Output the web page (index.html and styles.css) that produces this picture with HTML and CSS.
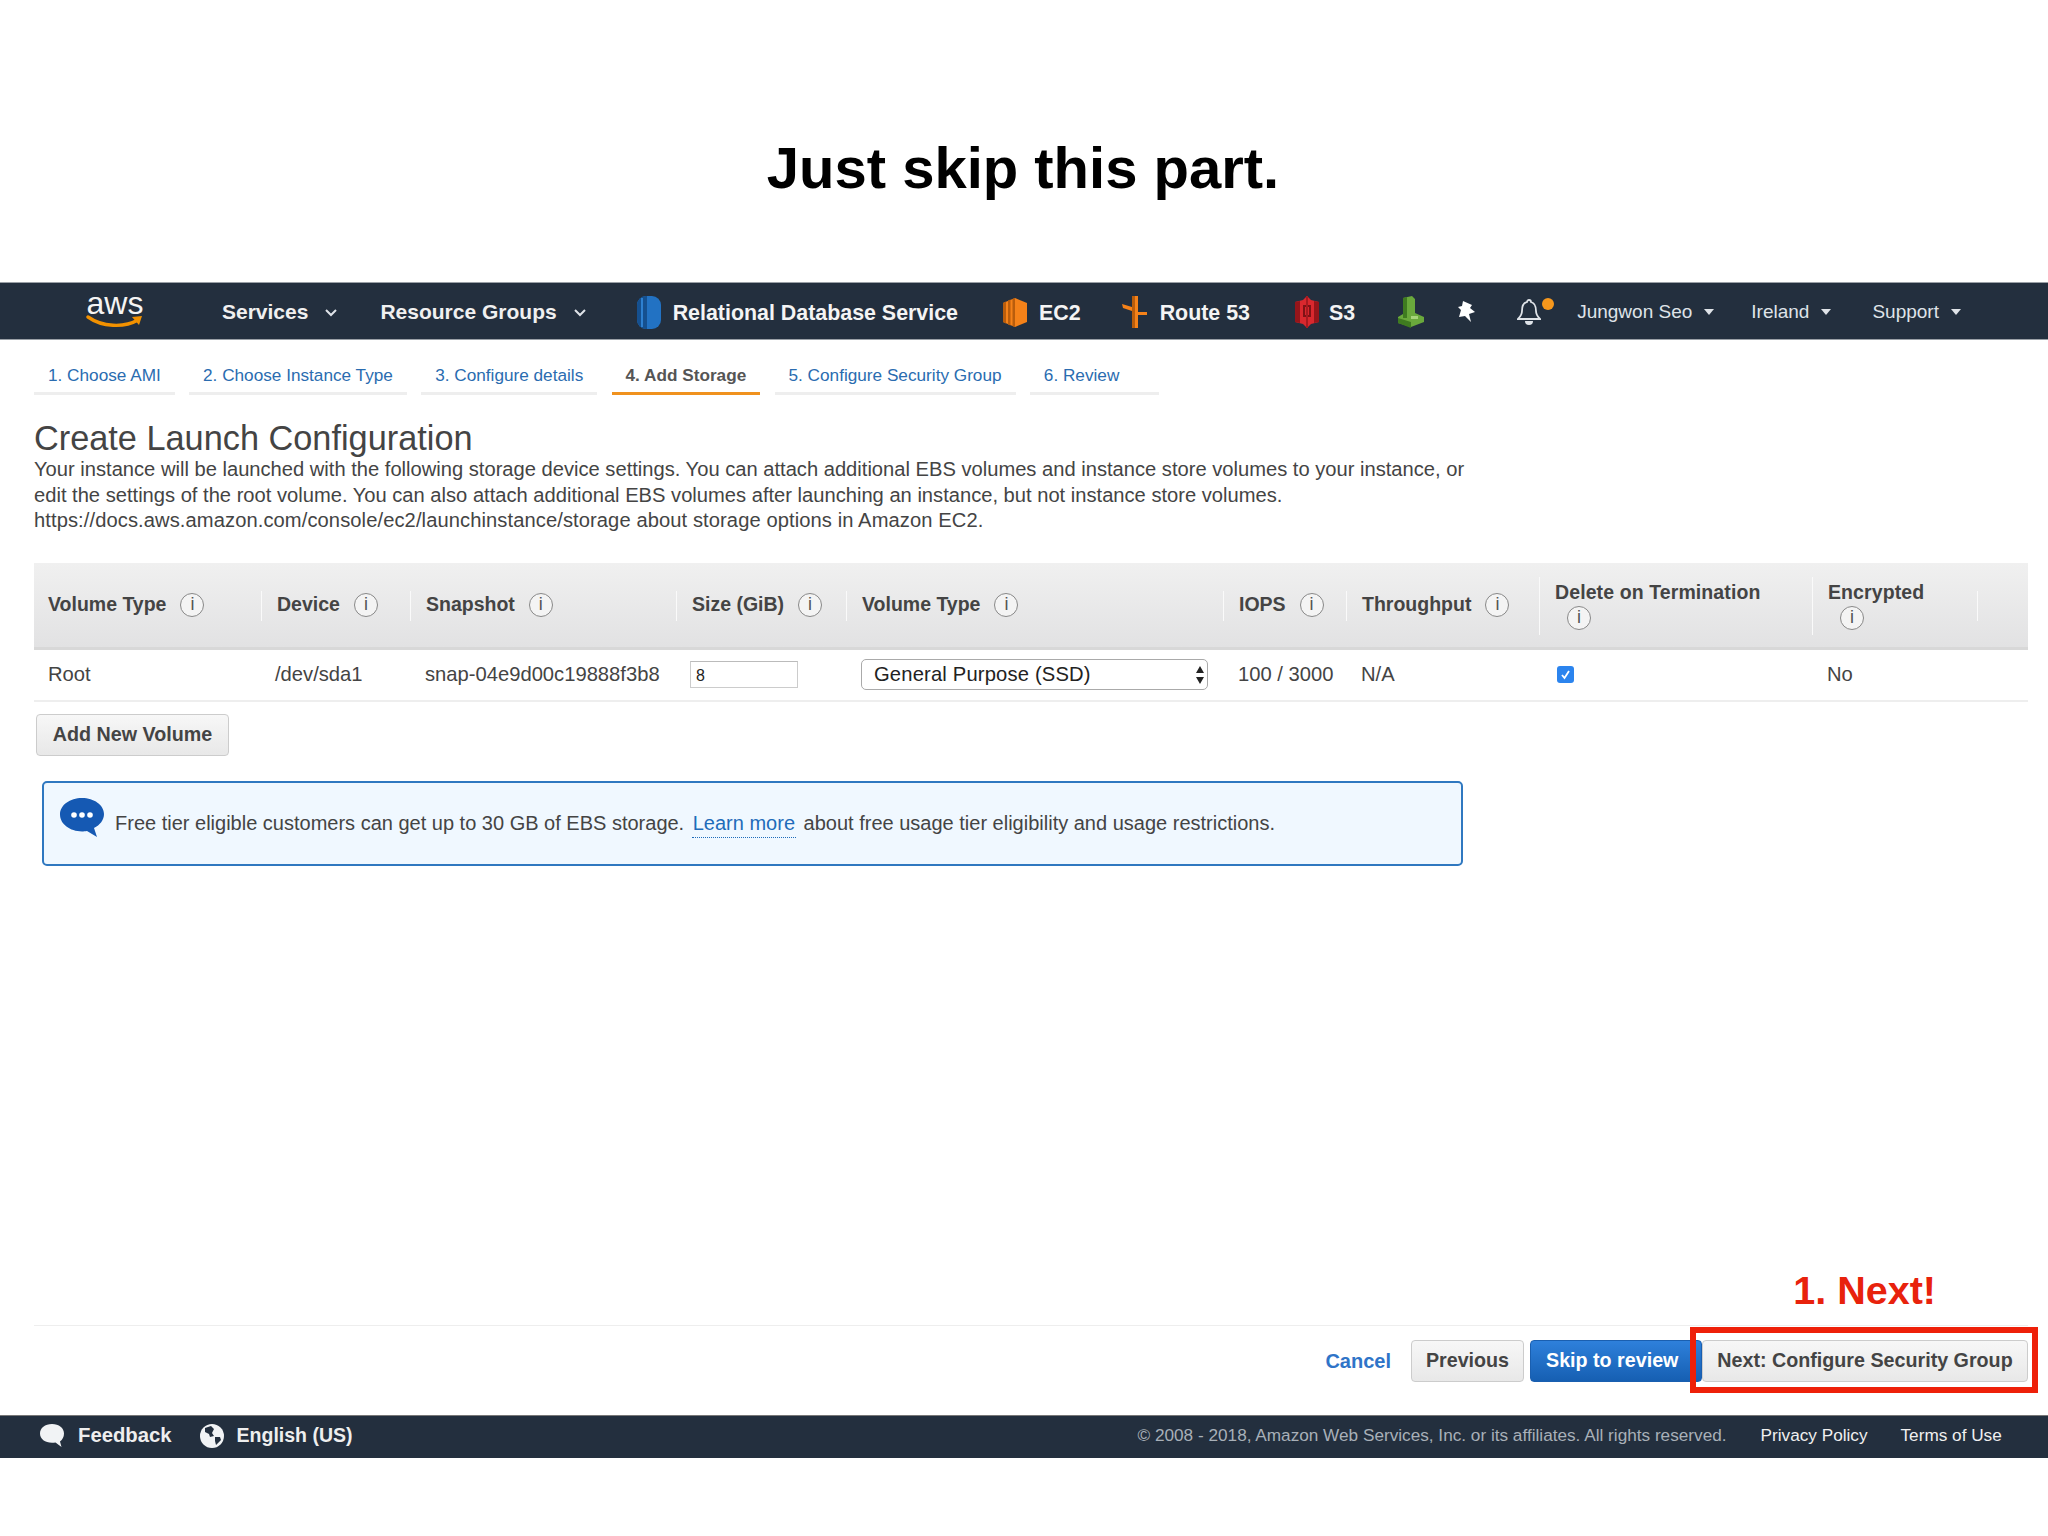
FILE: index.html
```html
<!DOCTYPE html>
<html lang="en">
<head>
<meta charset="utf-8">
<title>Just skip this part.</title>
<link rel="stylesheet" href="styles.css">
</head>
<body>
<header class="slide-head"><h1>Just skip this part.</h1></header>

<nav class="topnav">
  <div class="aws-logo">
    <span class="aws-word">aws</span>
    <svg class="aws-smile" width="58" height="14" viewBox="0 0 58 14"><path d="M2 2C16 12 38 13 52 5" fill="none" stroke="#f29100" stroke-width="3.4" stroke-linecap="round"/><path d="M46 2l10-1-3 9z" fill="#f29100"/></svg>
  </div>
  <a class="nav-menu nav-services">Services<svg class="chev" width="12" height="8" viewBox="0 0 12 8"><path d="M1 1l5 5 5-5" fill="none" stroke="#dfe3e8" stroke-width="2"/></svg></a>
  <a class="nav-menu nav-groups">Resource Groups<svg class="chev" width="12" height="8" viewBox="0 0 12 8"><path d="M1 1l5 5 5-5" fill="none" stroke="#dfe3e8" stroke-width="2"/></svg></a>
  <a class="svc svc-rds">
    <svg width="24" height="33" viewBox="0 0 24 33"><rect width="24" height="33" rx="9" fill="#2272c3"/><path d="M9 0h1v33H9a9 9 0 0 1-9-9V9a9 9 0 0 1 9-9z" fill="#15508f"/><path d="M4 2h2v29H4z" fill="#2e80d0"/></svg>
    <span>Relational Database Service</span>
  </a>
  <a class="svc svc-ec2">
    <svg width="24" height="29" viewBox="0 0 24 29"><path d="M12 0l12 5v19l-12 5L0 24V5z" fill="#f58219"/><path d="M0 5l3-1.500v22L0 24zM5 2.500l2.500-1v26l-2.500-1zM9.500 1l2.500-1v29l-2.500-1z" fill="#b95d0c"/></svg>
    <span>EC2</span>
  </a>
  <a class="svc svc-route">
    <svg width="25" height="32" viewBox="0 0 25 32"><path d="M10 0h6v32h-6z" fill="#f58219"/><path d="M10 0h3v32h-3z" fill="#b95d0c"/><path d="M0 8l10 3v4L1 12zM16 16h9v3h-9z" fill="#f58219"/></svg>
    <span>Route 53</span>
  </a>
  <a class="svc svc-s3">
    <svg width="24" height="32" viewBox="0 0 24 32"><path d="M12 0l4 4 8 2v20l-8 2-4 4-4-4-8-2V6l8-2z" fill="#d9282e"/><path d="M0 6l5-1v22l-5-1zM19 5l5 1v20l-5 1z" fill="#96151a"/><path d="M9 10h6v10H9z" fill="none" stroke="#7f1216" stroke-width="2"/><path d="M11 0h2v32h-2z" fill="#a81a20"/></svg>
    <span>S3</span>
  </a>
  <svg class="icon-green" width="26" height="32" viewBox="0 0 26 32"><path d="M5 2l9-2 3 3v14l9 4v5l-13 5L0 27v-6l5-3z" fill="#6aa93c"/><path d="M5 2l4-1v21H5zM0 22l13 4v6L0 27z" fill="#3f7b20"/><path d="M13 20h7v3h-7z" fill="#a7d47a"/></svg>
  <svg class="icon-pin" width="18" height="22" viewBox="0 0 18 22"><path d="M5 0l9 4-2 3 5 4-6 2 2 8-6-6-6 1 2-7-3-3 4-1z" fill="#fff"/></svg>
  <span class="bell">
    <svg width="24" height="28" viewBox="0 0 24 28"><path d="M12 2a2 2 0 0 1 2 2c4 1 5 5 5 9 0 4 2 6 4 8H1c2-2 4-4 4-8 0-4 1-8 5-9a2 2 0 0 1 2-2z" fill="none" stroke="#dfe3e8" stroke-width="1.800"/><path d="M8 23a4 4 0 0 0 8 0z" fill="#dfe3e8"/></svg>
    <i class="bell-dot"></i>
  </span>
  <a class="nav-user nav-jungwon">Jungwon Seo<i class="caret"></i></a>
  <a class="nav-user nav-ireland">Ireland<i class="caret"></i></a>
  <a class="nav-user nav-support">Support<i class="caret"></i></a>
</nav>

<ul class="tabs">
  <li class="tab"><a>1. Choose AMI</a></li>
  <li class="tab"><a>2. Choose Instance Type</a></li>
  <li class="tab"><a>3. Configure details</a></li>
  <li class="tab tab-active"><a>4. Add Storage</a></li>
  <li class="tab"><a>5. Configure Security Group</a></li>
  <li class="tab tab-last"><a>6. Review</a></li>
</ul>

<main class="content">
  <h2>Create Launch Configuration</h2>
  <p class="intro">Your instance will be launched with the following storage device settings. You can attach additional EBS volumes and instance store volumes to your instance, or<br>edit the settings of the root volume. You can also attach additional EBS volumes after launching an instance, but not instance store volumes.<br><span class="intro-url">https://docs.aws.amazon.com/console/ec2/launchinstance/storage about storage options in Amazon EC2.</span></p>

  <div class="vol-table">
    <div class="th"><span>Volume Type</span><i class="info">i</i></div>
    <div class="th sep"><span>Device</span><i class="info">i</i></div>
    <div class="th sep"><span>Snapshot</span><i class="info">i</i></div>
    <div class="th sep"><span>Size (GiB)</span><i class="info">i</i></div>
    <div class="th sep"><span>Volume Type</span><i class="info">i</i></div>
    <div class="th sep"><span>IOPS</span><i class="info">i</i></div>
    <div class="th sep"><span>Throughput</span><i class="info">i</i></div>
    <div class="th sep tall"><span>Delete on Termination</span><i class="info">i</i></div>
    <div class="th sep tall"><span>Encrypted</span><i class="info">i</i></div>
    <div class="th sep"></div>

    <div class="td">Root</div>
    <div class="td">/dev/sda1</div>
    <div class="td">snap-04e9d00c19888f3b8</div>
    <div class="td"><span class="size-input">8</span></div>
    <div class="td"><span class="select">General Purpose (SSD)<svg width="10" height="20" viewBox="0 0 10 20"><path d="M5 1l4 7H1zM5 19l4-7H1z" fill="#222"/></svg></span></div>
    <div class="td">100 / 3000</div>
    <div class="td">N/A</div>
    <div class="td"><span class="check"><svg width="11" height="11" viewBox="0 0 11 11"><path d="M2 6l2.500 3L9 2" fill="none" stroke="#fff" stroke-width="1.800"/></svg></span></div>
    <div class="td">No</div>
    <div class="td"></div>
  </div>

  <button class="btn btn-add">Add New Volume</button>

  <div class="notice">
    <svg class="notice-icon" width="44" height="39" viewBox="0 0 44 39"><path d="M22 0c12 0 22 7 22 16 0 6-4 11-10 14l3 9-10-6c-2 .4-3.500.4-5 .4C10 33.400 0 26 0 16.500 0 7 10 0 22 0z" fill="#1559b3"/><circle cx="14" cy="17" r="2.800" fill="#fff"/><circle cx="22" cy="17" r="2.800" fill="#fff"/><circle cx="30" cy="17" r="2.800" fill="#fff"/></svg>
    <span class="notice-text">Free tier eligible customers can get up to 30 GB of EBS storage. <a class="learn">Learn more</a> about free usage tier eligibility and usage restrictions.</span>
  </div>
</main>

<section class="actions">
  <strong class="next-note">1. Next!</strong>
  <div class="actions-row">
    <a class="cancel">Cancel</a>
    <button class="btn btn-prev">Previous</button>
    <button class="btn btn-primary">Skip to review</button>
    <button class="btn btn-next">Next: Configure Security Group</button>
    <span class="red-box"></span>
  </div>
</section>

<footer class="foot">
  <svg class="foot-bubble" width="24" height="24" viewBox="0 0 24 24"><path d="M12 0c7 0 12 4 12 9.500 0 3.500-1.500 6-4 8l1.500 5.500-6-4.500c-1 .2-2.500.3-3.500.3C5 18.800 0 15 0 9.500 0 4 5 0 12 0z" fill="#f1f3f5"/></svg>
  <a class="foot-main foot-feedback">Feedback</a>
  <svg class="foot-globe" width="24" height="24" viewBox="0 0 24 24"><circle cx="12" cy="12" r="12" fill="#f1f3f5"/><path d="M5 4l6-2 3 3-2 4 2 3-4 1-1-3-4-2zM15 13l5 0 1 3-5 5-1-4z" fill="#232f3e"/></svg>
  <a class="foot-main foot-lang">English (US)</a>
  <span class="copyright">© 2008 - 2018, Amazon Web Services, Inc. or its affiliates. All rights reserved.</span>
  <a class="foot-link foot-privacy">Privacy Policy</a>
  <a class="foot-link foot-terms">Terms of Use</a>
</footer>
</body>
</html>
```

FILE: styles.css
```css
* { box-sizing: border-box; }
html, body { margin: 0; padding: 0; }
body {
  width: 2048px;
  height: 1536px;
  overflow: hidden;
  background: #fff;
  color: #444;
  font-family: "Liberation Sans", Arial, sans-serif;
  font-size: 20px;
}
a { text-decoration: none; }

.slide-head {
  height: 282px;
  padding-top: 135px;
  text-align: center;
}
.slide-head h1 {
  margin: 0;
  color: #000;
  font-size: 58px;
  line-height: 66px;
  font-weight: 700;
  transform: translateX(-1px);
}

.topnav {
  display: flex;
  align-items: center;
  height: 58px;
  padding-top: 2px;
  background: #232f3e;
  border-top: 1px solid #9aa0a6;
  border-bottom: 1px solid #9aa0a6;
  color: #eee;
  font-weight: 700;
  font-size: 21px;
  white-space: nowrap;
}
.aws-logo {
  display: flex;
  flex-direction: column;
  align-items: center;
  width: 58px;
  margin-left: 86px;
  margin-top: -4px;
}
.aws-word {
  color: #f4f4f4;
  font-size: 32px;
  font-weight: 400;
  line-height: 24px;
}
.nav-menu { display: flex; align-items: center; color: #f0f0f0; }
.nav-menu .chev { margin-left: 17px; margin-top: 2px; }
.nav-services { margin-left: 78px; }
.nav-groups { margin-left: 43px; }
.svc { display: flex; align-items: center; gap: 12px; color: #f4f4f4; font-size: 21.400px; }
.svc span { margin-top: 2px; }
.svc-route { gap: 13px; }
.svc-s3 { gap: 10px; }
.svc-rds { margin-left: 51px; }
.svc-ec2 { margin-left: 45px; }
.svc-route { margin-left: 41px; }
.svc-s3 { margin-left: 45px; }
.icon-green { margin-left: 43px; }
.icon-pin { margin-left: 34px; }
.bell { display: flex; margin-left: 41px; align-items: flex-start; }
.bell-dot {
  width: 12px;
  height: 12px;
  margin-left: 1px;
  border-radius: 50%;
  background: #f7981d;
}
.nav-user {
  display: flex;
  align-items: center;
  color: #dfe3e8;
  font-size: 19px;
  font-weight: 400;
}
.caret {
  width: 0;
  height: 0;
  margin-left: 12px;
  border-left: 5px solid transparent;
  border-right: 5px solid transparent;
  border-top: 6px solid #dfe3e8;
}
.nav-jungwon { margin-left: 23px; }
.nav-ireland { margin-left: 37px; }
.nav-support { margin-left: 41px; }

.tabs {
  display: flex;
  gap: 14.300px;
  margin: 0;
  padding: 24px 0 0 34px;
  list-style: none;
  font-size: 17.200px;
}
.tab {
  height: 31px;
  padding: 0 14px;
  border-bottom: 3px solid #eee;
  color: #2a6cb0;
  line-height: 22px;
  white-space: nowrap;
}
.tab-last { padding-right: 40px; }
.tab-active {
  border-bottom-color: #f0921e;
  color: #555;
  font-weight: 700;
}

.content { padding: 0 20px 0 34px; }
.content h2 {
  margin: 23px 0 0;
  color: #444;
  font-size: 34.300px;
  font-weight: 400;
  line-height: 40px;
}
.intro {
  margin: -1px 0 .5px;
  line-height: 25.500px;
  font-size: 20.150px;
  color: #444;
  white-space: nowrap;
}
.intro-url { letter-spacing: .09px; }

.vol-table {
  display: grid;
  grid-template-columns: 227px 149px 266px 170px 377px 123px 193px 273px 165px 51px;
  grid-template-rows: 87px 50px;
  width: 1994px;
  margin-top: 29px;
  border-bottom: 2px solid #eee;
}
.th {
  position: relative;
  display: flex;
  align-items: center;
  align-content: center;
  flex-wrap: wrap;
  gap: 0 14px;
  padding-left: 14px;
  padding-right: 20px;
  background: linear-gradient(#f0f0f0, #e2e2e3);
  border-bottom: 3px solid #d8d8d8;
  color: #444;
  font-size: 19.500px;
  font-weight: 700;
  line-height: 27px;
}
.th.sep { padding-left: 16px; }
.th.sep::before {
  content: "";
  position: absolute;
  left: 0;
  top: 28px;
  bottom: 26px;
  width: 1px;
  background: #fafafa;
}
.th.tall { padding-right: 0; }
.th.tall span { width: 100%; letter-spacing: .1px; }
.th.tall .info { margin-left: 12px; }
.th.tall::before { top: 14px; bottom: 12px; }
.info {
  display: block;
  width: 24px;
  height: 24px;
  border: 1.500px solid #888;
  border-radius: 50%;
  background: #f4f4f4;
  color: #555;
  font-size: 18px;
  font-style: normal;
  font-weight: 400;
  line-height: 21px;
  text-align: center;
}
.td {
  display: flex;
  align-items: center;
  padding-left: 14px;
  color: #444;
  font-size: 20.200px;
  white-space: nowrap;
}
.td:nth-child(n+12) { padding-left: 15px; }
.td:nth-child(12) { padding-left: 14px; }
.size-input {
  display: block;
  width: 108px;
  height: 27px;
  margin-left: -1px;
  padding-left: 5px;
  border: 1px solid #ccc;
  border-top-color: #bbb;
  font-size: 16px;
  line-height: 27px;
  color: #222;
}
.select {
  display: flex;
  align-items: center;
  justify-content: space-between;
  width: 347px;
  height: 31px;
  padding: 0 2px 0 12px;
  border: 1px solid #aaa;
  border-radius: 5px;
  background: #fff;
  color: #222;
  letter-spacing: .17px;
}
.check {
  display: flex;
  align-items: center;
  justify-content: center;
  width: 17px;
  height: 17px;
  margin-left: 3px;
  border-radius: 3px;
  background: #2b84ee;
}

.btn {
  display: block;
  height: 42px;
  padding: 0 15px;
  border: 1px solid #ccc;
  border-radius: 4px;
  background: linear-gradient(#f7f7f7, #e8e8e8);
  color: #444;
  font-family: inherit;
  font-size: 19.700px;
  font-weight: 700;
  white-space: nowrap;
}
.btn-add { width: 193px; margin: 12px 0 0 2px; padding: 0; }

.notice {
  display: flex;
  align-items: flex-start;
  width: 1421px;
  height: 85px;
  margin: 25px 0 0 8px;
  padding: 15px 0 0 16px;
  border: 2px solid #2f78c0;
  border-radius: 5px;
  background: #f0f8ff;
}
.notice-text {
  margin: 13px 0 0 11px;
  color: #444;
  font-size: 20px;
  line-height: 24px;
  white-space: nowrap;
}
.learn {
  color: #1f6cba;
  border-bottom: 1px dotted #1f6cba;
  padding: 0 1px 3px;
  margin: 0 2px;
}

.actions { position: relative; margin-top: 459px; }
.next-note {
  position: absolute;
  right: 112px;
  top: -59px;
  color: #e8220c;
  font-size: 39.500px;
  line-height: 48px;
  font-weight: 700;
}
.actions-row {
  position: relative;
  display: flex;
  align-items: flex-start;
  justify-content: flex-end;
  height: 90px;
  margin: 0 20px 0 34px;
  padding-top: 14px;
  border-top: 1px solid #eee;
}
.cancel { margin: 10px 20px 0 0; color: #2f74c8; font-weight: 700; }
.btn-prev { width: 113px; padding: 0; margin-right: 6px; }
.btn-primary {
  width: 172px;
  padding: 0 0 0 15px;
  text-align: left;
  border-color: #1a5fb0;
  background: linear-gradient(#2e80db, #165fb2);
  color: #fff;
}
.btn-next { width: 326px; padding: 0; }
.red-box {
  position: absolute;
  right: -10px;
  top: 1px;
  width: 348px;
  height: 66px;
  border: 6px solid #ee2009;
}

.foot {
  display: flex;
  align-items: center;
  height: 43px;
  padding: 0 0 2px 40px;
  background: #232f3e;
  border-top: 1px solid #777;
  white-space: nowrap;
}
.foot-main { color: #eee; font-weight: 700; font-size: 20.300px; }
.foot-feedback { margin-left: 14px; }
.foot-globe { margin-left: 28px; }
.foot-lang { margin-left: 13px; font-size: 19.500px; }
.copyright { margin-left: 785px; color: #a8b0b8; font-size: 17.200px; }
.foot-link { color: #f0f0f0; font-size: 17.200px; }
.foot-privacy { margin-left: 34px; }
.foot-terms { margin-left: 33px; }
```
